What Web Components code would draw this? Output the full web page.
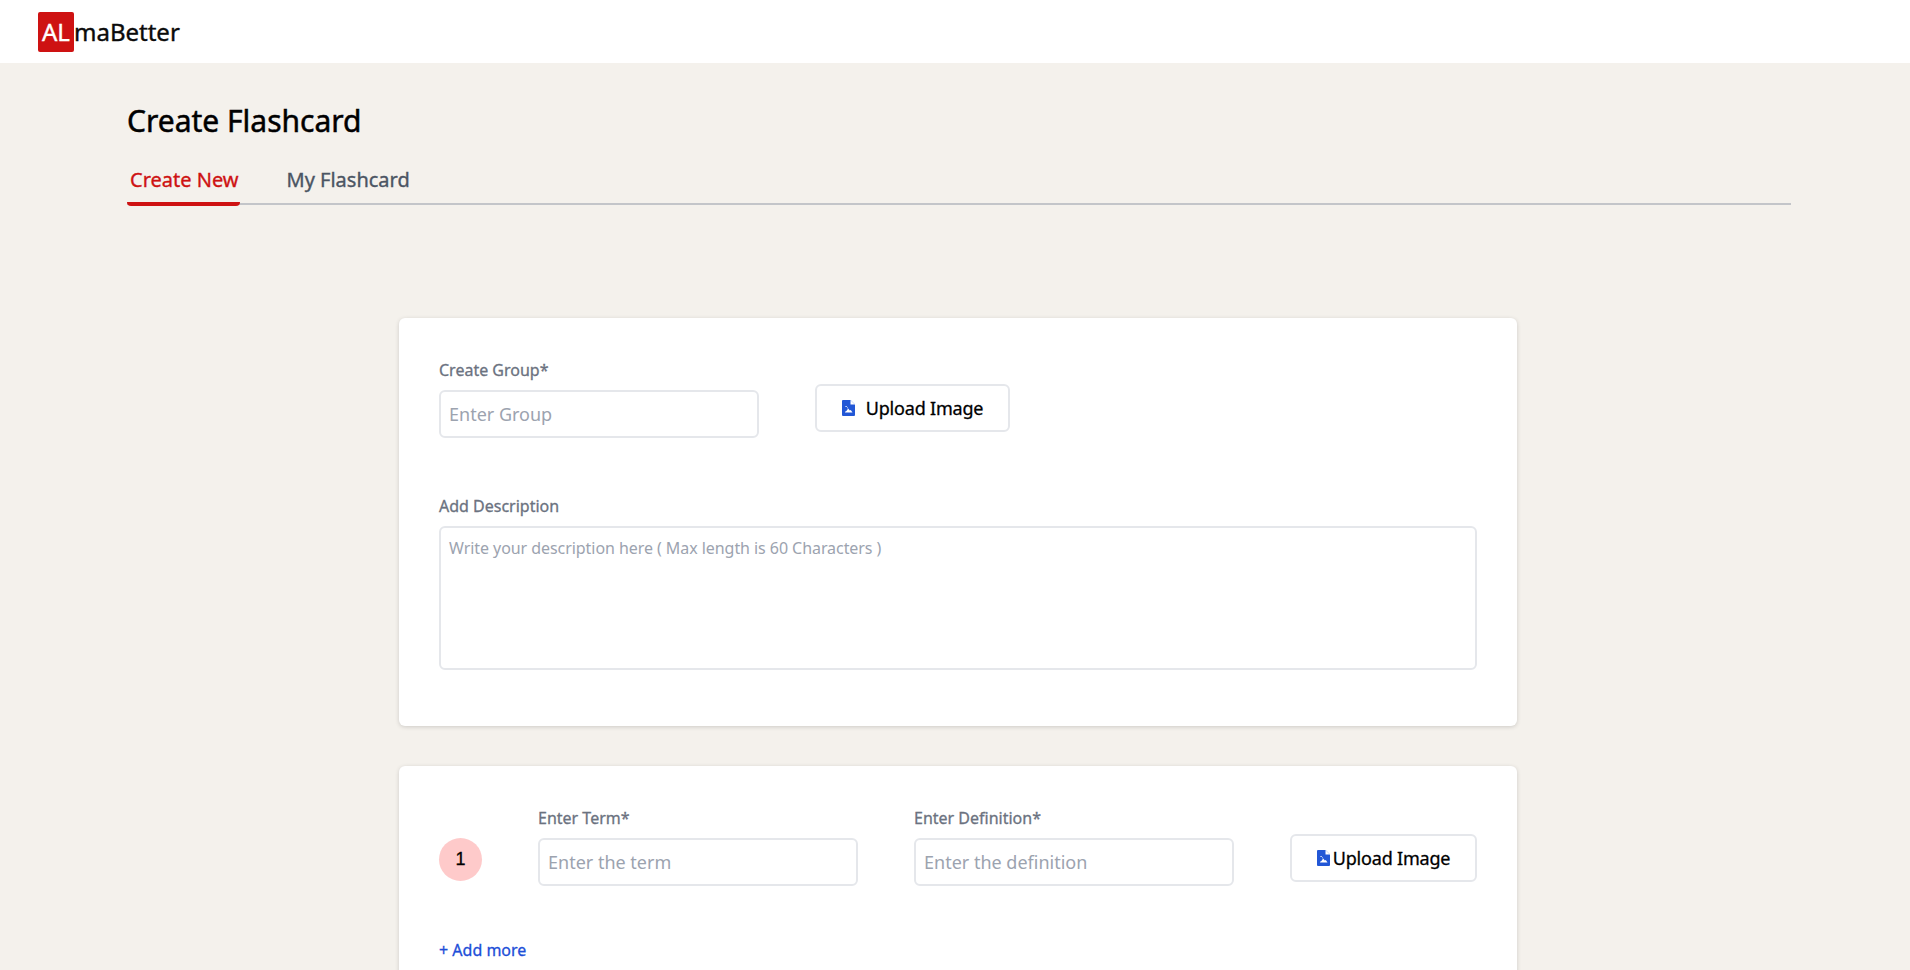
<!DOCTYPE html>
<html>
<head>
<meta charset="utf-8">
<title>Create Flashcard</title>
<style>
  html, body { margin: 0; height: 100%; overflow: hidden; }
  body { background: #f4f1ec; font-family: "Noto Sans", "Open Sans", sans-serif; }
</style>
</head>
<body>
<template id="upload-icon">
  <svg width="13" height="16" viewBox="0 0 13 16"><path fill="#2257d6" d="M1 0H8.500L13 4.500V15a1 1 0 0 1-1 1H1a1 1 0 0 1-1-1V1a1 1 0 0 1 1-1z"/><path fill="#fff" d="M8.500 0V4.500H13zM3 12.500c0-.9.600-1.400 1.400-1.500L6.200 8.500l1.600 2 1-.5 1.700 2.500zM3.500 6h1.200v1H3.500zM5 7.500h1v.8H5z"/></svg>
</template>

<app-header></app-header>
<flashcard-page></flashcard-page>

<script>
class AppHeader extends HTMLElement {
  connectedCallback() {
    this.attachShadow({ mode: 'open' });
    this.shadowRoot.innerHTML = `
      <style>
        :host { display: flex; align-items: center; height: 63px; background: #fff; padding-left: 38px; }
        .logo { display: flex; align-items: center; font-size: 24px; color: #0b0b0b; -webkit-text-stroke: 0.4px currentColor; }
        .mark { width: 36px; height: 40px; background: #ce1212; color: #fff; border-radius: 2px; display: flex; align-items: center; justify-content: center; font-size: 24px; }
      </style>
      <div class="logo"><span class="mark">AL</span><span>maBetter</span></div>
    `;
  }
}

class PageTabs extends HTMLElement {
  connectedCallback() {
    this.attachShadow({ mode: 'open' });
    this.shadowRoot.innerHTML = `
      <style>
        :host { display: flex; gap: 47px; border-bottom: 2px solid #c3c5c9; height: 47px; box-sizing: border-box; }
        .tab { font-size: 20px; color: #4b5563; line-height: 28px; height: 48px; box-sizing: border-box; padding-top: 8px; flex: none; -webkit-text-stroke: 0.35px currentColor; }
        .active { padding: 8px 1px 0 3px; color: #ce1212; border-bottom: 4px solid #ce1212; border-radius: 4px; }
      </style>
      <div class="tab active">Create New</div>
      <div class="tab">My Flashcard</div>
    `;
  }
}

class FormField extends HTMLElement {
  connectedCallback() {
    const tall = this.hasAttribute('tall');
    this.attachShadow({ mode: 'open' });
    this.shadowRoot.innerHTML = `
      <style>
        :host { display: block; }
        label { display: block; font-size: 16px; line-height: 24px; color: #6b7280; margin-bottom: 8px; -webkit-text-stroke: 0.3px currentColor; }
        .box { box-sizing: border-box; height: ${tall ? '144px' : '48px'}; border: 2px solid #e5e7eb; border-radius: 6px; padding: ${tall ? '8px 8px' : '0 8px'}; display: flex; align-items: ${tall ? 'flex-start' : 'center'}; color: #9ca3af; font-size: ${tall ? '16px' : '18px'}; letter-spacing: ${tall ? '-0.06px' : '0'}; line-height: 24px; background: #fff; }
      </style>
      <label>${this.getAttribute('label')}</label>
      <div class="box">${this.getAttribute('placeholder')}</div>
    `;
  }
}

class UploadButton extends HTMLElement {
  connectedCallback() {
    const gap = this.getAttribute('gap') || '3';
    this.attachShadow({ mode: 'open' });
    this.shadowRoot.innerHTML = `
      <style>
        :host { display: flex; align-items: center; justify-content: center; gap: ${gap}px; box-sizing: border-box; height: 48px; border: 2px solid #e5e7eb; border-radius: 6px; background: #fff; font-size: 18px; letter-spacing: -0.2px; color: #000; -webkit-text-stroke: 0.3px currentColor; }
        svg { display: block; }
      </style>
    `;
    this.shadowRoot.appendChild(document.getElementById('upload-icon').content.cloneNode(true));
    this.shadowRoot.appendChild(document.createTextNode('Upload Image'));
  }
}

class FormCard extends HTMLElement {
  connectedCallback() {
    this.attachShadow({ mode: 'open' });
    this.shadowRoot.innerHTML = `
      <style>
        :host { display: block; width: 1118px; box-sizing: border-box; background: #fff; border-radius: 6px; box-shadow: 0 1px 4px rgba(0,0,0,.16); padding: 40px 40px 56px; }
      </style>
      <slot></slot>
    `;
  }
}

class TermRow extends HTMLElement {
  connectedCallback() {
    this.attachShadow({ mode: 'open' });
    this.shadowRoot.innerHTML = `
      <style>
        :host { display: flex; align-items: flex-end; }
        .num { width: 43px; height: 43px; border-radius: 50%; background: #fecaca; display: flex; align-items: center; justify-content: center; font-family: "Liberation Sans", sans-serif; font-size: 18px; color: #000; margin-right: 56px; margin-bottom: 5px; flex: none; -webkit-text-stroke: 0.3px currentColor; }
        form-field { width: 320px; margin-right: 56px; flex: none; }
        upload-button { width: 187px; flex: none; margin-bottom: 4px; }
      </style>
      <div class="num">1</div>
      <form-field label="Enter Term*" placeholder="Enter the term"></form-field>
      <form-field label="Enter Definition*" placeholder="Enter the definition"></form-field>
      <upload-button></upload-button>
    `;
  }
}

class FlashcardPage extends HTMLElement {
  connectedCallback() {
    this.attachShadow({ mode: 'open' });
    this.shadowRoot.innerHTML = `
      <style>
        :host { display: block; padding: 0 119px 0 127px; }
        h1 { margin: 0; padding-top: 36px; font-size: 30px; line-height: 44px; font-weight: 400; color: #000; -webkit-text-stroke: 0.5px currentColor; }
        page-tabs { margin-top: 15px; }
        .stack { display: flex; flex-direction: column; align-items: center; gap: 40px; margin-top: 113px; width: 1662px; }
        .top { display: flex; align-items: flex-start; gap: 56px; margin-bottom: 56px; }
        .top form-field { width: 320px; }
        .top upload-button { width: 195px; margin-top: 26px; }
        .more { margin-top: 52px; font-size: 16px; color: #1d4ed8; line-height: 24px; -webkit-text-stroke: 0.3px currentColor; }
      </style>
      <h1>Create Flashcard</h1>
      <page-tabs></page-tabs>
      <div class="stack">
        <form-card>
          <div class="top">
            <form-field label="Create Group*" placeholder="Enter Group"></form-field>
            <upload-button gap="11"></upload-button>
          </div>
          <form-field tall label="Add Description" placeholder="Write your description here ( Max length is 60 Characters )"></form-field>
        </form-card>
        <form-card>
          <term-row></term-row>
          <div class="more">+ Add more</div>
        </form-card>
      </div>
    `;
  }
}

customElements.define('form-field', FormField);
customElements.define('upload-button', UploadButton);
customElements.define('form-card', FormCard);
customElements.define('term-row', TermRow);
customElements.define('page-tabs', PageTabs);
customElements.define('app-header', AppHeader);
customElements.define('flashcard-page', FlashcardPage);
</script>
</body>
</html>
